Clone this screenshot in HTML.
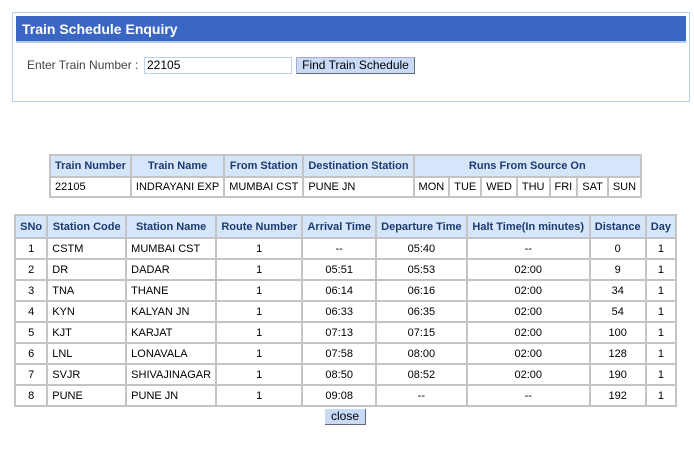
<!DOCTYPE html>
<html><head><meta charset="utf-8"><style>
body{margin:0;width:694px;height:453px;background:#fff;font-family:"Liberation Sans",Arial,sans-serif;position:relative;overflow:hidden}
.panel{position:absolute;left:12px;top:12px;width:676px;height:88px;border:1px solid #b5cdf0;background:#fff}
.bar{position:absolute;left:3px;top:3px;width:670px;height:27px;background:#3a66c4;border-bottom:2px solid #b5cdf0;color:#fff;font-weight:bold;font-size:14px;line-height:26px;padding-left:6px;box-sizing:border-box}
.lbl{position:absolute;left:27px;top:58px;font-size:12px;color:#444}
.inp{position:absolute;left:144px;top:57px;width:148px;height:17px;border:1px solid #bcd0ea;box-sizing:border-box;font-size:12px;line-height:15px;padding-left:2px}
.btn{position:absolute;left:296px;top:57px;width:119px;height:17px;background:#c8daf5;border:1px solid #aac;border-right-color:#667;border-bottom-color:#667;box-sizing:border-box;font-size:12px;text-align:center;line-height:15px}
table{position:absolute;border-collapse:separate;border-spacing:2px;background:#c4c4c4;font-size:11px}
td,th{background:#fff;padding:0 4px;white-space:nowrap}
th{background:#d6e6fa;color:#1d3a70;font-weight:bold;text-align:center}
#t1{left:49px;top:154px;width:593px}
#t1 th{height:20px}#t1 td{height:18px}
#t2{left:14px;top:214px;width:663px}
#t2 th{height:21px}#t2 td{height:19px}
.c{text-align:center}
.close{position:absolute;left:325px;top:409px;width:41px;height:16px;background:#c8daf5;border-right:1px solid #667;border-bottom:1px solid #667;box-sizing:border-box;font-size:12px;text-align:center;line-height:15px}
</style></head><body>
<div class="panel"><div class="bar">Train Schedule Enquiry</div></div>
<div class="lbl">Enter Train Number :</div>
<div class="inp">22105</div>
<div class="btn">Find Train Schedule</div>
<table id="t1">
<tr><th style="width:72px;text-align:left">Train Number</th><th style="width:86px">Train Name</th><th style="width:69px">From Station</th><th style="width:104px">Destination Station</th><th colspan="7">Runs From Source On</th></tr>
<tr><td>22105</td><td>INDRAYANI EXP</td><td>MUMBAI CST</td><td>PUNE JN</td><td>MON</td><td>TUE</td><td>WED</td><td>THU</td><td>FRI</td><td>SAT</td><td>SUN</td></tr>
</table>
<table id="t2">
<tr><th style="width:23px">SNo</th><th style="width:72px">Station Code</th><th style="width:79px">Station Name</th><th style="width:78px">Route Number</th><th style="width:64px">Arrival Time</th><th style="width:82px">Departure Time</th><th style="width:116px">Halt Time(In minutes)</th><th style="width:47px">Distance</th><th style="width:19px">Day</th></tr>
<tr><td class="c">1</td><td>CSTM</td><td>MUMBAI CST</td><td class="c">1</td><td class="c">--</td><td class="c">05:40</td><td class="c">--</td><td class="c">0</td><td class="c">1</td></tr>
<tr><td class="c">2</td><td>DR</td><td>DADAR</td><td class="c">1</td><td class="c">05:51</td><td class="c">05:53</td><td class="c">02:00</td><td class="c">9</td><td class="c">1</td></tr>
<tr><td class="c">3</td><td>TNA</td><td>THANE</td><td class="c">1</td><td class="c">06:14</td><td class="c">06:16</td><td class="c">02:00</td><td class="c">34</td><td class="c">1</td></tr>
<tr><td class="c">4</td><td>KYN</td><td>KALYAN JN</td><td class="c">1</td><td class="c">06:33</td><td class="c">06:35</td><td class="c">02:00</td><td class="c">54</td><td class="c">1</td></tr>
<tr><td class="c">5</td><td>KJT</td><td>KARJAT</td><td class="c">1</td><td class="c">07:13</td><td class="c">07:15</td><td class="c">02:00</td><td class="c">100</td><td class="c">1</td></tr>
<tr><td class="c">6</td><td>LNL</td><td>LONAVALA</td><td class="c">1</td><td class="c">07:58</td><td class="c">08:00</td><td class="c">02:00</td><td class="c">128</td><td class="c">1</td></tr>
<tr><td class="c">7</td><td>SVJR</td><td>SHIVAJINAGAR</td><td class="c">1</td><td class="c">08:50</td><td class="c">08:52</td><td class="c">02:00</td><td class="c">190</td><td class="c">1</td></tr>
<tr><td class="c">8</td><td>PUNE</td><td>PUNE JN</td><td class="c">1</td><td class="c">09:08</td><td class="c">--</td><td class="c">--</td><td class="c">192</td><td class="c">1</td></tr>
</table>
<div class="close">close</div>
</body></html>
